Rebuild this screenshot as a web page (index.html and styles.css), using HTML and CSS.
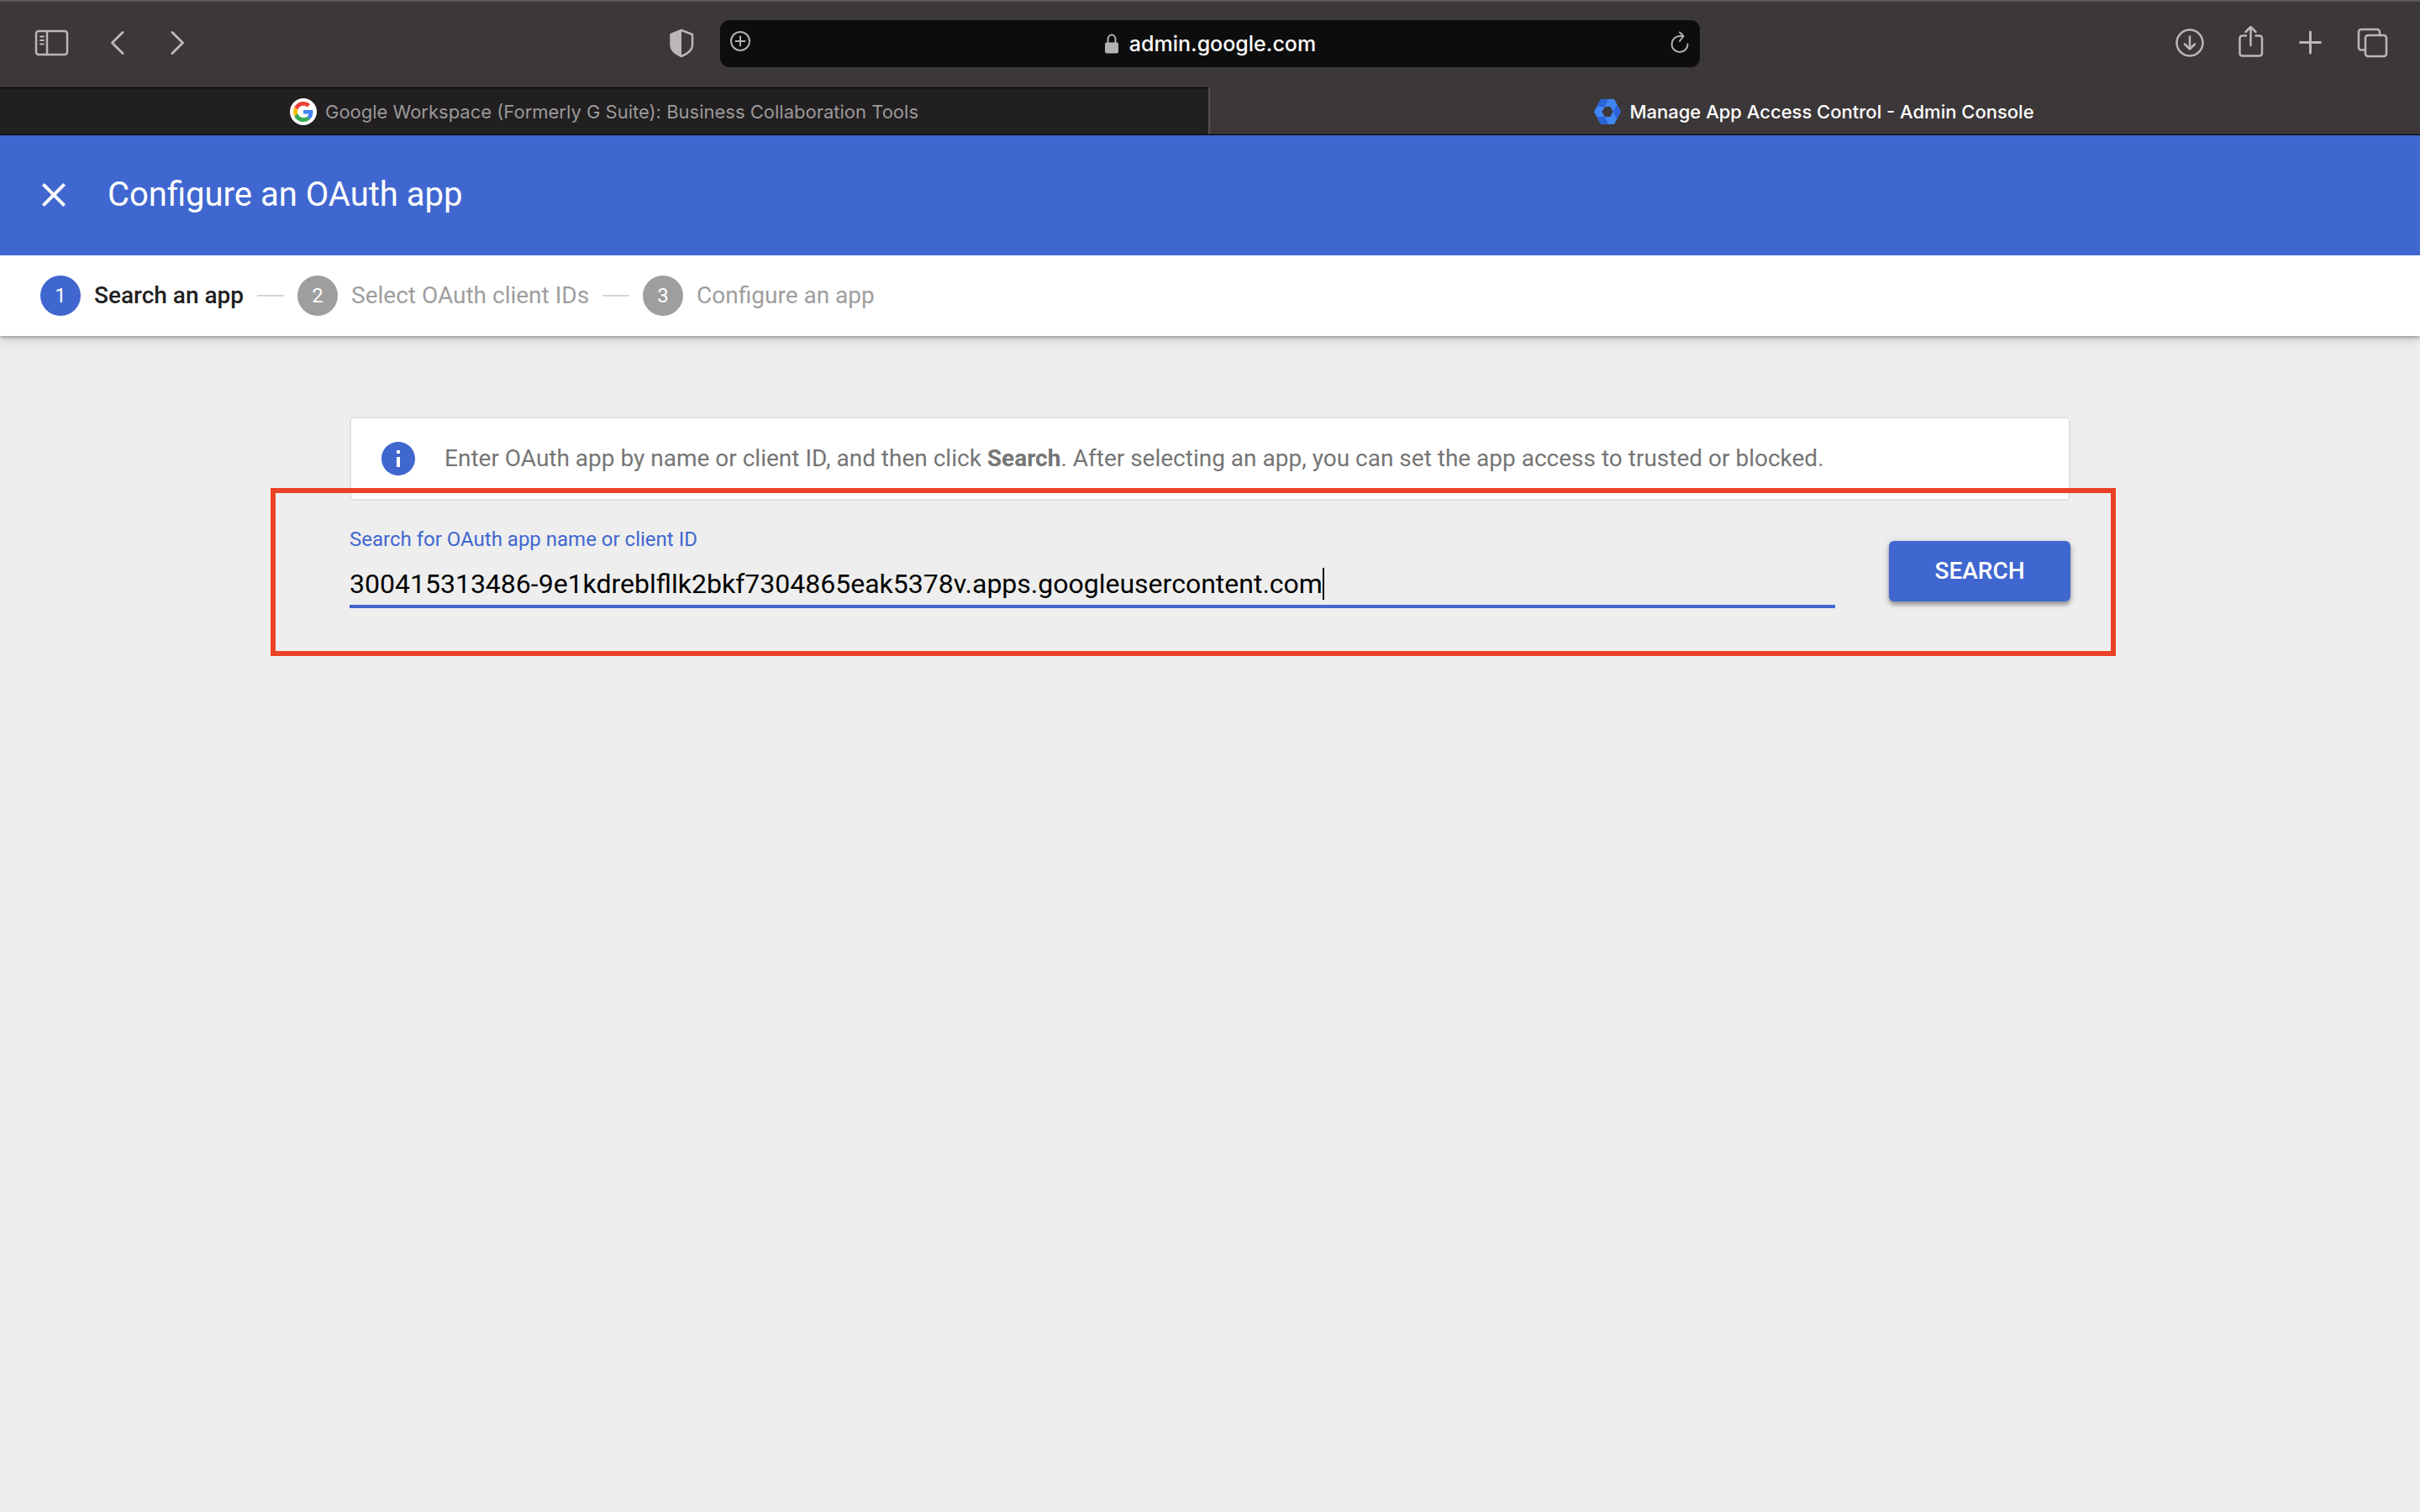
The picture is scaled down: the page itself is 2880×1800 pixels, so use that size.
FILE: index.html
```html
<!DOCTYPE html>
<html lang="en">
<head>
<meta charset="utf-8">
<title>Manage App Access Control - Admin Console</title>
<link rel="stylesheet" href="styles.css">
</head>
<body>
<div class="browser">
  <div class="toolbar">
    <div class="tools tools-left">
      <button class="tool" type="button" aria-label="Show sidebar">
        <svg viewBox="0 0 44 44"><rect x="3" y="7" width="37" height="28" rx="3"/><path d="M16 7v28"/><path class="thin" d="M8 13.500h4M8 18h4M8 22.500h4"/></svg>
      </button>
      <button class="tool" type="button" aria-label="Back">
        <svg viewBox="0 0 44 44"><path class="bold" d="M32 8.500L19.500 21L32 33.500"/></svg>
      </button>
      <button class="tool" type="button" aria-label="Forward">
        <svg viewBox="0 0 44 44"><path class="bold" d="M17 8.500L29.500 21L17 33.500"/></svg>
      </button>
      <button class="tool tool-end" type="button" aria-label="Privacy report">
        <svg viewBox="0 0 44 44"><path d="M22 6L35 11V24C35 30 29 34 22 37C15 34 9.500 30 9.500 24V11Z"/><path class="solid" d="M22 6L9.500 11V24C9.500 30 15 34 22 37Z"/></svg>
      </button>
    </div>
    <div class="address">
      <button class="address-button" type="button" aria-label="Add bookmark">
        <svg viewBox="0 0 24 30"><circle cx="12" cy="12" r="11"/><path d="M12 6.500v11M6.500 12h11"/></svg>
      </button>
      <a class="address-text" href="#">
        <svg class="lock" viewBox="0 0 18 24" aria-hidden="true"><path d="M4.500 12V7a4.500 5.500 0 0 1 9 0v5"/><rect class="solid" x="1" y="10.500" width="16" height="13" rx="2"/></svg>
        <span>admin.google.com</span>
      </a>
      <button class="address-button" type="button" aria-label="Reload">
        <svg viewBox="0 0 24 30"><path d="M21.500 15.500A9.500 9.500 0 1 1 12 6H16M12 1.500L16.500 6L12 12"/></svg>
      </button>
    </div>
    <div class="tools tools-right">
      <button class="tool" type="button" aria-label="Downloads">
        <svg viewBox="0 0 44 44"><circle cx="20" cy="21" r="15.500"/><path d="M20 13.500v15M14 22.500l6 6l6-6"/></svg>
      </button>
      <button class="tool" type="button" aria-label="Share">
        <svg viewBox="0 0 44 44"><path d="M15 12.500H10.500a3 3 0 0 0-3 3V33.500a3 3 0 0 0 3 3H31a3 3 0 0 0 3-3V15.500a3 3 0 0 0-3-3H26.500M20.500 24V2.500M14.500 8l6-6l6 6"/></svg>
      </button>
      <button class="tool" type="button" aria-label="New tab">
        <svg viewBox="0 0 44 44"><path class="bold" d="M19.500 8v25M7.500 20.500h24"/></svg>
      </button>
      <button class="tool" type="button" aria-label="Tab overview">
        <svg viewBox="0 0 44 44"><path d="M30 12V8a3 3 0 0 0-3-3H8a3 3 0 0 0-3 3V26.500a3 3 0 0 0 3 3H12"/><rect x="13" y="12" width="25" height="25" rx="3"/></svg>
      </button>
    </div>
  </div>
  <nav class="tabs" aria-label="Tabs">
    <a class="tab" href="#">
      <svg class="favicon" viewBox="0 0 32 32" aria-hidden="true">
        <circle cx="16" cy="16" r="16" fill="#fff"/>
        <g transform="translate(4 4) scale(.5)">
          <path fill="#ea4335" d="M24 9.500c3.540 0 6.710 1.220 9.210 3.600l6.850-6.850C35.900 2.380 30.470 0 24 0 14.620 0 6.510 5.380 2.560 13.220l7.980 6.190C12.430 13.720 17.740 9.500 24 9.500z"/>
          <path fill="#4285f4" d="M46.980 24.550c0-1.570-.15-3.090-.38-4.550H24v9.020h12.940c-.58 2.960-2.260 5.480-4.780 7.180l7.730 6c4.510-4.180 7.090-10.360 7.090-17.650z"/>
          <path fill="#fbbc05" d="M10.530 28.590c-.48-1.450-.76-2.990-.76-4.590s.27-3.140.76-4.590l-7.980-6.190C.92 16.460 0 20.120 0 24c0 3.880.92 7.540 2.560 10.780l7.970-6.190z"/>
          <path fill="#34a853" d="M24 48c6.480 0 11.930-2.130 15.890-5.810l-7.730-6c-2.150 1.450-4.920 2.300-8.160 2.300-6.260 0-11.570-4.220-13.470-9.910l-7.980 6.190C6.510 42.620 14.620 48 24 48z"/>
        </g>
      </svg>
      <span>Google Workspace (Formerly G Suite): Business Collaboration Tools</span>
    </a>
    <a class="tab tab-active" href="#" aria-current="page">
      <svg class="favicon" viewBox="0 0 32 32" aria-hidden="true">
        <path fill="#4285f4" d="M8 1H24L32 16L24 31H8L0 16Z"/>
        <path fill="#2a63d4" d="M8 1H17L13 10H3.500ZM27.500 7.500L32 16L27.500 24.500L22.500 16ZM3.500 22H13L17 31H8Z"/>
        <path fill="#3c3738" d="M13 10H19.500L22.500 16L19.500 22H13L9.500 16Z"/>
      </svg>
      <span>Manage App Access Control - Admin Console</span>
    </a>
  </nav>
</div>

<header class="app-header">
  <div class="title-bar">
    <button class="close" type="button" aria-label="Close">
      <svg viewBox="0 0 24 24"><path d="M19 6.410L17.590 5 12 10.590 6.410 5 5 6.410 10.590 12 5 17.590 6.410 19 12 13.410 17.590 19 19 17.590 13.410 12z"/></svg>
    </button>
    <h1>Configure an OAuth app</h1>
  </div>
  <ol class="steps">
    <li class="step step-current" aria-current="step"><span class="step-number">1</span><span>Search an app</span></li>
    <li class="step"><span class="step-number">2</span><span>Select OAuth client IDs</span></li>
    <li class="step"><span class="step-number">3</span><span>Configure an app</span></li>
  </ol>
</header>

<main class="content">
  <div class="notice">
    <svg class="notice-icon" viewBox="0 0 24 24" aria-hidden="true"><path d="M12 2C6.480 2 2 6.480 2 12s4.480 10 10 10 10-4.480 10-10S17.520 2 12 2zm1 15h-2v-6h2v6zm0-8h-2V7h2v2z"/></svg>
    <p>Enter OAuth app by name or client ID, and then click <b>Search</b>. After selecting an app, you can set the app access to trusted or blocked.</p>
  </div>
  <form class="search">
    <div class="field">
      <label for="app-query">Search for OAuth app name or client ID</label>
      <div class="field-line">
        <input id="app-query" type="text" value="300415313486-9e1kdreblfllk2bkf7304865eak5378v.apps.googleusercontent.com">
        <span class="caret"></span>
      </div>
    </div>
    <button class="search-button" type="button">SEARCH</button>
    <div class="highlight"></div>
  </form>
</main>
</body>
</html>
```
FILE: styles.css
```css
* {
  box-sizing: border-box;
}

body {
  margin: 0;
  min-height: 100vh;
  background: #eee;
  font-family: Roboto, "Liberation Sans", sans-serif;
  font-size: 28px;
  line-height: 40px;
}

button {
  padding: 0;
  border: 0;
  background: none;
  font: inherit;
  color: inherit;
}

a {
  color: inherit;
  text-decoration: none;
}

svg {
  display: block;
}

/* Browser window */
.browser {
  background: #3c3738;
  border-top: 2px solid #5d595a;
  font-family: Inter, "Liberation Sans", sans-serif;
}

.toolbar {
  display: grid;
  grid-template-columns: 1fr min(1166px, 50vw) 1fr;
  gap: 24px;
  align-items: center;
  padding: 22px 32px 24px;
}

.tools {
  display: flex;
  align-items: center;
}

.tools-left {
  gap: 30px;
  padding-left: 8px;
}

.tools-right {
  gap: 28px;
  justify-content: flex-end;
  padding-right: 2px;
}

.tool-end {
  margin-left: auto;
}

.tool svg {
  width: 44px;
  height: 44px;
  fill: none;
  stroke: #bbb7b8;
  stroke-width: 2.5;
  stroke-linecap: round;
  stroke-linejoin: round;
}

.tool .thin {
  stroke-width: 2;
}

.tool .bold {
  stroke-width: 3;
}

.tool .solid {
  fill: #bbb7b8;
  stroke: none;
}

.address {
  display: flex;
  align-items: center;
  justify-content: space-between;
  height: 56px;
  padding: 0 12px;
  border-radius: 11px;
  background: #0d0d0d;
  color: #fff;
}

.address svg {
  fill: none;
  stroke: #b2b2b2;
  stroke-width: 2;
  stroke-linecap: round;
  stroke-linejoin: round;
}

.address-button svg {
  width: 24px;
  height: 30px;
}

.address-text {
  display: flex;
  align-items: center;
  gap: 12px;
  font-size: 25px;
  font-weight: 500;
}

.address .lock {
  width: 18px;
  height: 24px;
}

.address .lock .solid {
  fill: #b2b2b2;
  stroke: none;
}

.tabs {
  display: grid;
  grid-template-columns: 1fr 1fr;
  border-bottom: 1px solid #000;
}

.tab {
  display: flex;
  align-items: center;
  justify-content: center;
  gap: 10px;
  height: 56px;
  border-top: 1px solid #000;
  border-right: 2px solid #555152;
  background: #211f20;
  color: #9b999a;
  font-size: 22px;
}

.tab-active {
  border-color: transparent;
  background: none;
  color: #fff;
  font-weight: 500;
}

.favicon {
  width: 32px;
  height: 32px;
}

/* Application header */
.app-header {
  background: #fff;
  box-shadow: 0 2px 4px rgba(0, 0, 0, .3), 0 4px 16px rgba(0, 0, 0, .14);
}

.title-bar {
  display: flex;
  align-items: center;
  gap: 40px;
  height: 143px;
  padding: 0 40px 1px;
  background: #4067d0;
  color: #fff;
}

.close svg {
  width: 48px;
  height: 48px;
  fill: #fff;
}

h1 {
  margin: 0;
  font-size: 40px;
  font-weight: 400;
  line-height: 48px;
}

.steps {
  display: flex;
  margin: 0;
  padding: 24px 48px;
  list-style: none;
  color: #9e9e9e;
}

.step {
  display: flex;
  align-items: center;
  gap: 16px;
}

.step:not(:last-child)::after {
  content: "";
  width: 32px;
  height: 2px;
  margin-right: 16px;
  background: #d6d6d6;
}

.step-number {
  width: 48px;
  border-radius: 50%;
  background: #9e9e9e;
  color: #fff;
  font-size: 24px;
  font-weight: 400;
  line-height: 48px;
  text-align: center;
}

.step-current {
  color: #212121;
  font-weight: 500;
}

.step-current .step-number {
  background: #4067d0;
}

/* Page content */
.content {
  max-width: 2048px;
  margin: 0 auto;
  padding: 96px 0;
}

.notice {
  display: flex;
  align-items: center;
  gap: 31px;
  padding: 24px 32px;
  border: 2px solid #e0e0e0;
  border-radius: 6px;
  background: #fff;
  color: #757575;
}

.notice-icon {
  flex: none;
  width: 48px;
  height: 48px;
  fill: #4067d0;
}

.notice p {
  margin: 0;
  line-height: 48px;
}

.search {
  position: relative;
  display: flex;
  align-items: flex-start;
  gap: 64px;
  padding-top: 30px;
}

.field {
  flex: 1;
  min-width: 0;
}

.field label {
  display: block;
  color: #4067d0;
  font-size: 24px;
  line-height: 32px;
}

.field-line {
  display: flex;
  margin-top: 18px;
  padding-bottom: 6px;
  border-bottom: 4px solid #4067d0;
}

.field input {
  field-sizing: content;
  max-width: 100%;
  height: 38px;
  padding: 0;
  border: 0;
  outline: 0;
  background: none;
  color: #000;
  font-family: inherit;
  font-size: 32px;
}

.caret {
  width: 2px;
  background: #000;
}

.search-button {
  width: 216px;
  margin-top: 18px;
  border-radius: 6px;
  background: #4067d0;
  box-shadow: 0 4px 4px rgba(0, 0, 0, .26), 0 2px 10px rgba(0, 0, 0, .2);
  color: #fff;
  font-weight: 500;
  line-height: 72px;
}

/* Callout frame drawn over the search row */
.highlight {
  position: absolute;
  inset: -15px -54px -57px -94px;
  border: 6px solid #eb4226;
  pointer-events: none;
}
```
